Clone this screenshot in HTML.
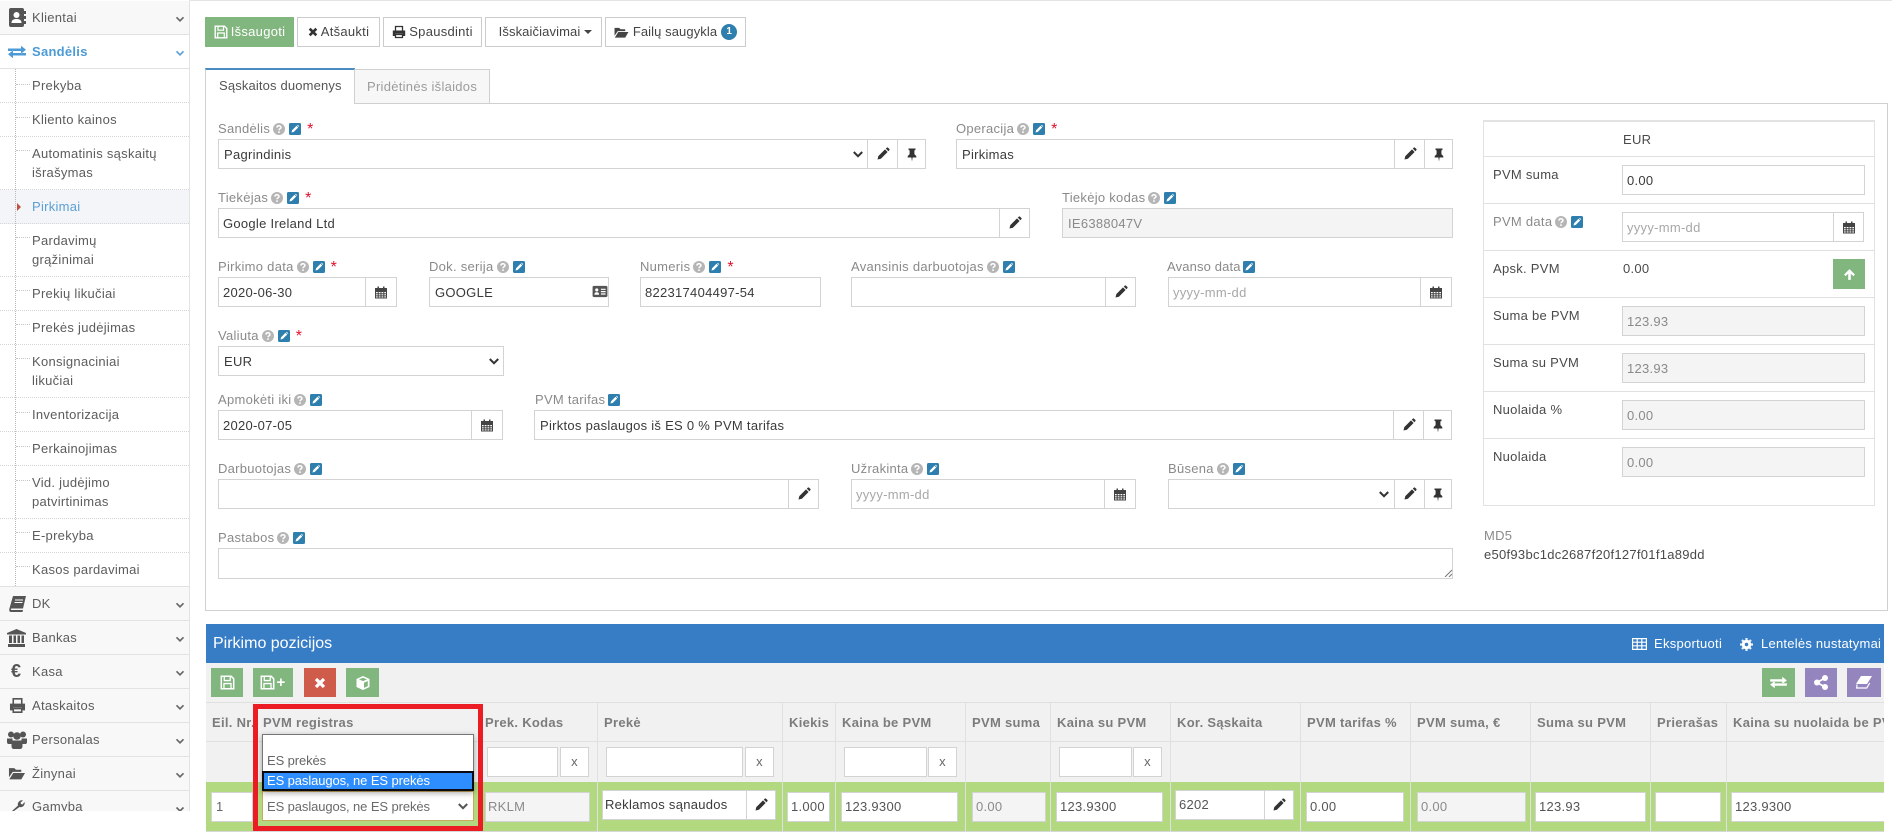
<!DOCTYPE html>
<html lang="lt"><head><meta charset="utf-8"><title>Pirkimai</title>
<style>
html,body{margin:0;padding:0;background:#fff}
body{width:1892px;height:840px;position:relative;overflow:hidden;font:13px/18px "Liberation Sans",Arial,sans-serif;color:#444;letter-spacing:.28px}
div,span{box-sizing:border-box}
.a,.r,.b,.i,.t,.l,.x,.c,svg.s{position:absolute}
.r{left:0;width:189px;padding-left:32px;color:#5c5c5c;border-bottom:1px dotted #d4d4d4;line-height:19px;padding-top:7px}
.m{left:0;width:189px;height:34px;position:absolute;background:#f8f8f8;border-bottom:1px solid #e2e2e2;padding:7px 0 0 32px;color:#5c5c5c;line-height:19px}
.h{position:absolute;left:16px;width:14px;border-top:1px dotted #c4c4c4;height:0}
.b{height:30px;top:17px;border:1px solid #ccc;background:#fff;color:#444;display:flex;align-items:center;justify-content:center;gap:3px;white-space:nowrap}
.b svg{flex:none}
.g{background:#82b67f;border-color:#82b67f;color:#fff}
.i{height:30px;border:1px solid #d3d3d3;background:#fff;color:#3a3a3a;line-height:30px;padding-left:5px;white-space:nowrap;overflow:hidden}
.n{line-height:28px}
.d{background:#f4f4f4;color:#8a8a8a}
.p{color:#a8a8a8}
.x{height:30px;border:1px solid #d3d3d3;background:#fff;display:flex;align-items:center;justify-content:center;color:#666}
.l{height:18px;color:#8a8a8a;display:flex;align-items:center;white-space:nowrap}
.l svg{flex:none}
.hp{width:12px;height:12px;margin-left:3px}
.ed{width:12px;height:12px;margin-left:4px}
.l b{color:#e3122d;font-weight:400;font-size:16px;margin-left:6px;line-height:14px;height:12px}
.t{color:#4a4a4a;white-space:nowrap;line-height:18px}
.th{position:absolute;top:713px;color:#7c7c7c;font-weight:700;white-space:nowrap;line-height:19px;letter-spacing:.3px}
.v{position:absolute;top:703px;height:128px;width:1px;background:#e0e0e0}
.w{position:absolute;height:1px;background:#e0e0e0}
.gb{position:absolute;top:668px;height:29px;display:flex;align-items:center;justify-content:center;gap:1px}
</style></head><body>
<svg width="0" height="0" style="position:absolute"><defs>
<symbol id="pen" viewBox="0 0 14 14"><path fill="currentColor" d="M1.500 12.500l.8-3.400 6.700-6.700 2.600 2.600-6.700 6.700zM9.800 1.600l.9-.9a1 1 0 0 1 1.400 0l1.200 1.200a1 1 0 0 1 0 1.400l-.9.9z"/></symbol>
<symbol id="pin" viewBox="0 0 14 14"><path fill="currentColor" d="M3.500 1h7v1.200L9.400 3v3.600l1.900 2V10H7.600L7 14l-.6-4H2.700V8.600l1.900-2V3L3.500 2.200z"/></symbol>
<symbol id="cal" viewBox="0 0 14 14"><path fill="none" stroke="currentColor" d="M1.500 3.500h11v9h-11zM1.500 6h11M1.500 8.200h11M1.500 10.400h11M4.200 6v6.500M7 6v6.500M9.800 6v6.500"/><path fill="currentColor" d="M1 2.500h12V5.500H1zM3.500 1h1.500v3H3.500zM9 1h1.500v3H9z"/></symbol>
<symbol id="chv" viewBox="0 0 12 12"><path fill="none" stroke="currentColor" stroke-width="2" d="M1.800 4l4.200 4.200L10.200 4"/></symbol>
<symbol id="hp" viewBox="0 0 12 12"><circle cx="6" cy="6" r="6" fill="#b5b5b5"/><path fill="none" stroke="#fff" stroke-width="1.500" d="M4 4.600c0-1.200.9-1.800 2-1.800s2 .7 2 1.700c0 1.300-2 1.300-2 2.700"/><rect x="5.200" y="8.300" width="1.600" height="1.600" fill="#fff"/></symbol>
<symbol id="ed" viewBox="0 0 12 12"><rect width="12" height="12" rx="1.500" fill="#2f7fae"/><path fill="#fff" d="M2.500 9.500l.6-2.300 4.400-4.400 1.700 1.700-4.400 4.400zM8.100 2.300l.6-.5 1.500 1.500-.6.6z"/></symbol>
<symbol id="save" viewBox="0 0 14 14"><path fill="none" stroke="currentColor" stroke-width="1.400" d="M1.200 1.200h9.300l2.300 2.300v9.300H1.200z"/><path fill="none" stroke="currentColor" stroke-width="1.200" d="M4 1.500v3.700h5.500V1.500M3.700 12.500V8h6.600v4.500"/></symbol>
<symbol id="tm" viewBox="0 0 12 12"><path fill="none" stroke="currentColor" stroke-width="3.200" d="M2 2l8 8M10 2l-8 8"/></symbol>
<symbol id="prt" viewBox="0 0 14 14"><path fill="none" stroke="currentColor" stroke-width="1.300" d="M3.500 6V1.500h7V6M3.500 9.500h7v3h-7z"/><path fill="currentColor" d="M.8 5.500h12.400v5.500h-2.500V8.800H3.300V11H.8z"/></symbol>
<symbol id="fol" viewBox="0 0 16 14"><path fill="currentColor" d="M.5 2h5l1.500 1.500h5V5.500H4L.5 10.500zM4.500 6.500H15.500L12 12.500H.8z"/></symbol>
<symbol id="card" viewBox="0 0 16 14"><rect x="0" y="1" width="16" height="12" rx="1.500" fill="currentColor"/><circle cx="4.500" cy="5.300" r="1.700" fill="#fff"/><path fill="#fff" d="M2 10.500c0-2 1-2.700 2.500-2.700S7 8.500 7 10.500zM9 4h5v1.300H9zM9 6.500h5v1.300H9zM9 9h5v1.300H9z"/></symbol>
<symbol id="swap" viewBox="0 0 18 14"><path fill="currentColor" d="M0 3.500h13V.8L18 4.700l-5 3.900V6H0zM18 8H5V5.400L0 9.300l5 3.900v-2.700h13z"/></symbol>
<symbol id="up" viewBox="0 0 12 12"><path fill="#fff" d="M6 1l5 5-1.500 1.500L7.200 5.300V11H4.800V5.300L2.500 7.500 1 6z"/></symbol>
</defs></svg>

<div class="a" style="left:0;top:0;width:1892px;height:1px;background:#e4e4e4"></div>

<!-- sidebar -->
<div class="a" style="left:0;top:0;width:190px;height:811px;background:#fff;border-right:1px solid #e3e3e3"></div>
<div class="m" style="top:1px">Klientai</div>
<div class="m" style="top:35px;background:#fff;color:#4d9bd6;font-weight:700">Sandėlis</div>
<div class="r a" style="top:69px;height:34px">Prekyba</div>
<div class="r a" style="top:103px;height:34px">Kliento kainos</div>
<div class="r a" style="top:137px;height:53px">Automatinis sąskaitų<br>išrašymas</div>
<div class="r a" style="top:190px;height:34px;background:#f3f5f8;color:#5b9fd3">Pirkimai</div>
<div class="r a" style="top:224px;height:53px">Pardavimų<br>grąžinimai</div>
<div class="r a" style="top:277px;height:34px">Prekių likučiai</div>
<div class="r a" style="top:311px;height:34px">Prekės judėjimas</div>
<div class="r a" style="top:345px;height:53px">Konsignaciniai<br>likučiai</div>
<div class="r a" style="top:398px;height:34px">Inventorizacija</div>
<div class="r a" style="top:432px;height:34px">Perkainojimas</div>
<div class="r a" style="top:466px;height:53px">Vid. judėjimo<br>patvirtinimas</div>
<div class="r a" style="top:519px;height:34px">E-prekyba</div>
<div class="r a" style="top:553px;height:34px;border-bottom:1px solid #e2e2e2">Kasos pardavimai</div>
<div class="m" style="top:587px">DK</div>
<div class="m" style="top:621px">Bankas</div>
<div class="m" style="top:655px">Kasa</div>
<div class="m" style="top:689px">Ataskaitos</div>
<div class="m" style="top:723px">Personalas</div>
<div class="m" style="top:757px">Žinynai</div>
<div class="m" style="top:791px;height:20px;overflow:hidden;border:0;padding-top:6px">Gamyba</div>
<div class="a" style="left:15px;top:69px;height:517px;border-left:1px dotted #b8b8b8"></div>
<div class="h" style="top:84px"></div><div class="h" style="top:117px"></div><div class="h" style="top:150px"></div><div class="h" style="top:237px"></div><div class="h" style="top:290px"></div><div class="h" style="top:324px"></div><div class="h" style="top:358px"></div><div class="h" style="top:412px"></div><div class="h" style="top:446px"></div><div class="h" style="top:480px"></div><div class="h" style="top:532px"></div><div class="h" style="top:566px"></div>
<div class="a" style="left:17px;top:203px;border-left:4px solid #c0503f;border-top:4px solid transparent;border-bottom:4px solid transparent"></div>
<svg class="s" style="left:175px;top:14px;width:10px;height:10px;color:#666"><use href="#chv"/></svg>
<svg class="s" style="left:175px;top:48px;width:10px;height:10px;color:#5aa0d6"><use href="#chv"/></svg>
<svg class="s" style="left:175px;top:600px;width:10px;height:10px;color:#666"><use href="#chv"/></svg>
<svg class="s" style="left:175px;top:634px;width:10px;height:10px;color:#666"><use href="#chv"/></svg>
<svg class="s" style="left:175px;top:668px;width:10px;height:10px;color:#666"><use href="#chv"/></svg>
<svg class="s" style="left:175px;top:702px;width:10px;height:10px;color:#666"><use href="#chv"/></svg>
<svg class="s" style="left:175px;top:736px;width:10px;height:10px;color:#666"><use href="#chv"/></svg>
<svg class="s" style="left:175px;top:770px;width:10px;height:10px;color:#666"><use href="#chv"/></svg>
<svg class="s" style="left:175px;top:804px;width:10px;height:7px;color:#666" viewBox="0 0 12 8"><use href="#chv" width="12" height="12"/></svg>
<!-- sidebar icons -->
<svg class="s" style="left:9px;top:8px;width:17px;height:19px" viewBox="0 0 17 19"><rect width="15" height="19" rx="2" fill="#555"/><rect x="15" y="3" width="2" height="3" fill="#555"/><rect x="15" y="8" width="2" height="3" fill="#555"/><rect x="15" y="13" width="2" height="3" fill="#555"/><circle cx="7.500" cy="7" r="3" fill="#fff"/><path fill="#fff" d="M2.500 15c0-3 2-4 5-4s5 1 5 4z"/></svg>
<svg class="s" style="left:8px;top:45px;width:18px;height:14px;color:#4d9bd6"><use href="#swap"/></svg>
<svg class="s" style="left:9px;top:596px;width:17px;height:16px" viewBox="0 0 17 16"><path fill="#555" d="M4 0h13l-3 12.500H2.500c-1 0-1 1.500 0 1.500H14l-.5 2H2C.5 16 0 14.500.3 13z"/><path stroke="#fff" d="M6 4h8M5.500 6.500h8"/></svg>
<svg class="s" style="left:7px;top:629px;width:19px;height:18px" viewBox="0 0 19 18"><path fill="#555" d="M9.500 0L19 4v1.500H0V4zM2 6.500h3V14H2zM6.500 6.500h2.500V14H6.500zM10.500 6.500H13V14h-2.500zM14.500 6.500h2.500V14h-2.500zM1 15h17v3H1z"/></svg>
<div class="a" style="left:11px;top:661px;font-size:18px;font-weight:700;color:#555;line-height:20px">€</div>
<svg class="s" style="left:9px;top:697px;width:17px;height:17px;color:#555"><use href="#prt"/></svg>
<svg class="s" style="left:7px;top:731px;width:20px;height:18px" viewBox="0 0 20 18"><g fill="#555"><circle cx="4" cy="3.500" r="3"/><circle cx="16" cy="3.500" r="3"/><circle cx="10" cy="5" r="3.800"/><path d="M0 7.500h5.500V13H1.500C.5 13 0 12 0 11zM14.500 7.500H20V11c0 1-.5 2-1.500 2h-4zM4.500 9.500h11V15c0 2-1 3-2.500 3H7c-1.500 0-2.500-1-2.500-3z"/></g></svg>
<svg class="s" style="left:8px;top:766px;width:18px;height:15px;color:#555"><use href="#fol"/></svg>
<svg class="s" style="left:11px;top:800px;width:15px;height:11px" viewBox="0 0 15 11"><path fill="#555" d="M1 11l6-5.500a4 4 0 0 1 5-5l-2.500 2 .5 1.500 1.500.5 2-2.500a4 4 0 0 1-5 5L3 11z"/></svg>

<!-- top buttons -->
<div class="b g" style="left:205px;width:89px"><svg width="14" height="14" style="color:#fff"><use href="#save"/></svg>Išsaugoti</div>
<div class="b" style="left:297px;width:83px"><svg width="10" height="10" style="color:#333"><use href="#tm"/></svg>Atšaukti</div>
<div class="b" style="left:383px;width:99px"><svg width="14" height="14" style="color:#333"><use href="#prt"/></svg>Spausdinti</div>
<div class="b" style="left:485px;width:117px;padding-left:4px;letter-spacing:.11px">Išskaičiavimai<span style="border-top:4px solid #444;border-left:4px solid transparent;border-right:4px solid transparent;margin-left:1px"></span></div>
<div class="b" style="left:605px;width:141px;letter-spacing:.09px"><svg width="15" height="13" style="color:#444;margin-right:1px"><use href="#fol"/></svg>Failų saugykla<span style="width:16px;height:16px;border-radius:50%;background:#2f7fae;color:#fff;font-size:10px;font-weight:700;line-height:16px;text-align:center;letter-spacing:0;margin-left:1px">1</span></div>

<!-- tabs + panel -->
<div class="a" style="left:205px;top:103px;width:1683px;height:508px;border:1px solid #d0d0d0"></div>
<div class="a" style="left:354px;top:69px;width:136px;height:35px;background:#f7f7f7;border:1px solid #d0d0d0;color:#9c9c9c;padding:8px 0 0 12px">Pridėtinės išlaidos</div>
<div class="a" style="left:205px;top:68px;width:150px;height:36px;background:#fff;border-left:1px solid #d0d0d0;border-right:1px solid #d0d0d0;border-top:2px solid #4a8bc4;padding:7px 0 0 13px;color:#555;letter-spacing:.15px">Sąskaitos duomenys</div>

<!-- form -->
<div class="l" style="left:218px;top:120px">Sandėlis<svg class="hp"><use href="#hp"/></svg><svg class="ed"><use href="#ed"/></svg><b>*</b></div>
<div class="i" style="left:218px;top:139px;width:650px">Pagrindinis</div>
<svg class="s" style="left:852px;top:148px;width:12px;height:12px;color:#333"><use href="#chv"/></svg>
<div class="x" style="left:867px;top:139px;width:31px;color:#333"><svg width="14" height="14"><use href="#pen"/></svg></div>
<div class="x" style="left:897px;top:139px;width:29px;color:#333"><svg width="14" height="15"><use href="#pin"/></svg></div>

<div class="l" style="left:956px;top:120px">Operacija<svg class="hp"><use href="#hp"/></svg><svg class="ed"><use href="#ed"/></svg><b>*</b></div>
<div class="i" style="left:956px;top:139px;width:439px">Pirkimas</div>
<div class="x" style="left:1394px;top:139px;width:31px;color:#333"><svg width="14" height="14"><use href="#pen"/></svg></div>
<div class="x" style="left:1424px;top:139px;width:29px;color:#333"><svg width="14" height="15"><use href="#pin"/></svg></div>

<div class="l" style="left:218px;top:189px">Tiekėjas<svg class="hp"><use href="#hp"/></svg><svg class="ed"><use href="#ed"/></svg><b>*</b></div>
<div class="i" style="left:218px;top:208px;width:782px;padding-left:4px">Google Ireland Ltd</div>
<div class="x" style="left:999px;top:208px;width:31px;color:#333"><svg width="14" height="14"><use href="#pen"/></svg></div>

<div class="l" style="left:1062px;top:189px">Tiekėjo kodas<svg class="hp"><use href="#hp"/></svg><svg class="ed"><use href="#ed"/></svg></div>
<div class="i d" style="left:1062px;top:208px;width:391px">IE6388047V</div>

<div class="l" style="left:218px;top:258px">Pirkimo data<svg class="hp"><use href="#hp"/></svg><svg class="ed"><use href="#ed"/></svg><b>*</b></div>
<div class="i" style="left:218px;top:277px;width:148px;padding-left:4px">2020-06-30</div>
<div class="x" style="left:365px;top:277px;width:32px;color:#444"><svg width="14" height="15"><use href="#cal"/></svg></div>

<div class="l" style="left:429px;top:258px">Dok. serija<svg class="hp"><use href="#hp"/></svg><svg class="ed"><use href="#ed"/></svg></div>
<div class="i" style="left:429px;top:277px;width:180px">GOOGLE</div>
<svg class="s" style="left:592px;top:285px;width:16px;height:13px;color:#555"><use href="#card"/></svg>

<div class="l" style="left:640px;top:258px">Numeris<svg class="hp"><use href="#hp"/></svg><svg class="ed"><use href="#ed"/></svg><b>*</b></div>
<div class="i" style="left:640px;top:277px;width:181px;padding-left:4px">822317404497-54</div>

<div class="l" style="left:851px;top:258px">Avansinis darbuotojas<svg class="hp"><use href="#hp"/></svg><svg class="ed"><use href="#ed"/></svg></div>
<div class="i" style="left:851px;top:277px;width:255px"></div>
<div class="x" style="left:1105px;top:277px;width:31px;color:#333"><svg width="14" height="14"><use href="#pen"/></svg></div>

<div class="l" style="left:1167px;top:258px;letter-spacing:.15px">Avanso data<svg class="ed" style="margin-left:2px"><use href="#ed"/></svg></div>
<div class="i p" style="left:1168px;top:277px;width:253px;padding-left:4px">yyyy-mm-dd</div>
<div class="x" style="left:1420px;top:277px;width:32px;color:#444"><svg width="14" height="15"><use href="#cal"/></svg></div>

<div class="l" style="left:218px;top:327px">Valiuta<svg class="hp"><use href="#hp"/></svg><svg class="ed"><use href="#ed"/></svg><b>*</b></div>
<div class="i" style="left:218px;top:346px;width:286px;padding-left:5px">EUR</div>
<svg class="s" style="left:488px;top:355px;width:12px;height:12px;color:#333"><use href="#chv"/></svg>

<div class="l" style="left:218px;top:391px">Apmokėti iki<svg class="hp"><use href="#hp"/></svg><svg class="ed"><use href="#ed"/></svg></div>
<div class="i" style="left:218px;top:410px;width:254px;padding-left:4px">2020-07-05</div>
<div class="x" style="left:471px;top:410px;width:32px;color:#444"><svg width="14" height="15"><use href="#cal"/></svg></div>

<div class="l" style="left:535px;top:391px">PVM tarifas<svg class="ed" style="margin-left:3px"><use href="#ed"/></svg></div>
<div class="i" style="left:534px;top:410px;width:860px">Pirktos paslaugos iš ES 0 % PVM tarifas</div>
<div class="x" style="left:1393px;top:410px;width:31px;color:#333"><svg width="14" height="14"><use href="#pen"/></svg></div>
<div class="x" style="left:1423px;top:410px;width:29px;color:#333"><svg width="14" height="15"><use href="#pin"/></svg></div>

<div class="l" style="left:218px;top:460px">Darbuotojas<svg class="hp"><use href="#hp"/></svg><svg class="ed"><use href="#ed"/></svg></div>
<div class="i" style="left:218px;top:479px;width:571px"></div>
<div class="x" style="left:788px;top:479px;width:31px;color:#333"><svg width="14" height="14"><use href="#pen"/></svg></div>

<div class="l" style="left:851px;top:460px">Užrakinta<svg class="hp"><use href="#hp"/></svg><svg class="ed"><use href="#ed"/></svg></div>
<div class="i p" style="left:851px;top:479px;width:254px;padding-left:4px">yyyy-mm-dd</div>
<div class="x" style="left:1104px;top:479px;width:32px;color:#444"><svg width="14" height="15"><use href="#cal"/></svg></div>

<div class="l" style="left:1168px;top:460px">Būsena<svg class="hp"><use href="#hp"/></svg><svg class="ed"><use href="#ed"/></svg></div>
<div class="i" style="left:1168px;top:479px;width:227px"></div>
<svg class="s" style="left:1378px;top:488px;width:12px;height:12px;color:#333"><use href="#chv"/></svg>
<div class="x" style="left:1394px;top:479px;width:31px;color:#333"><svg width="14" height="14"><use href="#pen"/></svg></div>
<div class="x" style="left:1424px;top:479px;width:28px;color:#333"><svg width="14" height="15"><use href="#pin"/></svg></div>

<div class="l" style="left:218px;top:529px">Pastabos<svg class="hp"><use href="#hp"/></svg><svg class="ed"><use href="#ed"/></svg></div>
<div class="i" style="left:218px;top:548px;width:1235px;height:31px"></div>
<svg class="s" style="left:1444px;top:569px;width:8px;height:8px"><path stroke="#777" fill="none" d="M1 8L8 1M5 8l3-3"/></svg>

<!-- summary table -->
<div class="a" style="left:1483px;top:120px;width:392px;height:386px;border:1px solid #e2e2e2;border-top:2px solid #e2e2e2"></div>
<div class="w" style="left:1483px;top:156px;width:392px"></div>
<div class="w" style="left:1483px;top:203px;width:392px"></div>
<div class="w" style="left:1483px;top:250px;width:392px"></div>
<div class="w" style="left:1483px;top:297px;width:392px"></div>
<div class="w" style="left:1483px;top:344px;width:392px"></div>
<div class="w" style="left:1483px;top:391px;width:392px"></div>
<div class="w" style="left:1483px;top:438px;width:392px"></div>
<div class="t" style="left:1623px;top:131px">EUR</div>
<div class="t" style="left:1493px;top:166px">PVM suma</div>
<div class="i" style="left:1622px;top:165px;width:243px;padding-left:4px">0.00</div>
<div class="l" style="left:1493px;top:213px">PVM data<svg class="hp"><use href="#hp"/></svg><svg class="ed"><use href="#ed"/></svg></div>
<div class="i p" style="left:1622px;top:212px;width:212px;padding-left:4px">yyyy-mm-dd</div>
<div class="x" style="left:1833px;top:212px;width:31px;color:#444"><svg width="14" height="15"><use href="#cal"/></svg></div>
<div class="t" style="left:1493px;top:260px">Apsk. PVM</div>
<div class="t" style="left:1623px;top:260px">0.00</div>
<div class="a" style="left:1833px;top:259px;width:32px;height:30px;background:#82b67f;display:flex;align-items:center;justify-content:center"><svg width="13" height="13"><use href="#up"/></svg></div>
<div class="t" style="left:1493px;top:307px">Suma be PVM</div>
<div class="i d" style="left:1622px;top:306px;width:243px;padding-left:4px">123.93</div>
<div class="t" style="left:1493px;top:354px">Suma su PVM</div>
<div class="i d" style="left:1622px;top:353px;width:243px;padding-left:4px">123.93</div>
<div class="t" style="left:1493px;top:401px">Nuolaida %</div>
<div class="i d" style="left:1622px;top:400px;width:243px;padding-left:4px">0.00</div>
<div class="t" style="left:1493px;top:448px">Nuolaida</div>
<div class="i d" style="left:1622px;top:447px;width:243px;padding-left:4px">0.00</div>
<div class="t" style="left:1484px;top:527px;color:#8a8a8a">MD5</div>
<div class="t" style="left:1484px;top:546px">e50f93bc1dc2687f20f127f01f1a89dd</div>

<!-- grid -->
<div class="a" style="left:206px;top:624px;width:1678px;height:39px;background:#367dc6"></div>
<div class="a" style="left:213px;top:634px;color:#fff;font-size:16px;line-height:20px;letter-spacing:0">Pirkimo pozicijos</div>
<svg class="s" style="left:1632px;top:638px;width:15px;height:12px" viewBox="0 0 15 12"><path fill="none" stroke="#fff" stroke-width="1.200" d="M.6.6h13.800v10.800H.6zM.6 4.200h13.800M.6 7.800h13.800M5.200.6v10.800M9.800.6v10.800"/></svg>
<div class="a" style="left:1654px;top:635px;color:#fff">Eksportuoti</div>
<svg class="s" style="left:1740px;top:638px;width:13px;height:13px" viewBox="0 0 13 13"><circle cx="6.500" cy="6.500" r="3.500" fill="none" stroke="#fff" stroke-width="2.500"/><path stroke="#fff" stroke-width="2.200" d="M6.500 0v13M0 6.500h13M2 2l9 9M11 2l-9 9" opacity=".9"/><circle cx="6.500" cy="6.500" r="1.700" fill="#367dc6"/></svg>
<div class="a" style="left:1761px;top:635px;color:#fff;white-space:nowrap;letter-spacing:.24px">Lentelės nustatymai</div>

<div class="a" style="left:206px;top:663px;width:1678px;height:119px;background:#f1f1f1"></div>
<div class="gb g" style="left:211px;width:32px"><svg width="15" height="15" style="color:#fff"><use href="#save"/></svg></div>
<div class="gb g" style="left:253px;width:40px"><svg width="15" height="15" style="color:#fff"><use href="#save"/></svg><span style="color:#fff;font-weight:700;font-size:15px;line-height:14px">+</span></div>
<div class="gb" style="left:304px;width:32px;background:#cf5b4b"><svg width="12" height="12" style="color:#fff"><use href="#tm"/></svg></div>
<div class="gb g" style="left:346px;width:33px"><svg width="16" height="16" viewBox="0 0 16 16"><path fill="#fff" d="M8 1l6.500 3v8L8 15l-6.500-3V4zM8 2.700L4 4.400l4 1.700 4-1.700zM9 7.700v5.200l3.800-1.800V6z"/></svg></div>
<div class="gb g" style="left:1762px;width:33px"><svg width="17" height="13" style="color:#fff"><use href="#swap"/></svg></div>
<div class="gb" style="left:1805px;width:32px;background:#9585bf"><svg width="14" height="15" viewBox="0 0 14 15"><circle cx="3" cy="7.500" r="3" fill="#fff"/><circle cx="11" cy="3" r="3" fill="#fff"/><circle cx="11" cy="12" r="3" fill="#fff"/><path stroke="#fff" stroke-width="1.800" d="M3 7.500L11 3M3 7.500L11 12"/></svg></div>
<div class="gb" style="left:1847px;width:34px;background:#9585bf"><svg width="16" height="13" viewBox="0 0 16 13"><path fill="#fff" d="M5 0h11l-5 8H0z"/><path fill="none" stroke="#fff" stroke-width="1.200" d="M1 8.500l-.3 3.500h10l3-5"/></svg></div>

<div class="w" style="left:206px;top:702px;width:1678px"></div>
<div class="w" style="left:206px;top:741px;width:1678px"></div>
<div class="a" style="left:206px;top:782px;width:1678px;height:49px;background:#b2d97f"></div>
<div class="w" style="left:206px;top:831px;width:1678px;background:#d8d8d8"></div>
<div class="v" style="left:597px"></div><div class="v" style="left:782px"></div><div class="v" style="left:835px"></div><div class="v" style="left:965px"></div><div class="v" style="left:1050px"></div><div class="v" style="left:1170px"></div><div class="v" style="left:1300px"></div><div class="v" style="left:1410px"></div><div class="v" style="left:1530px"></div><div class="v" style="left:1650px"></div><div class="v" style="left:1726px"></div>

<div class="th" style="left:212px">Eil. Nr.</div>
<div class="th" style="left:263px">PVM registras</div>
<div class="th" style="left:485px">Prek. Kodas</div>
<div class="th" style="left:604px">Prekė</div>
<div class="th" style="left:789px">Kiekis</div>
<div class="th" style="left:842px">Kaina be PVM</div>
<div class="th" style="left:972px">PVM suma</div>
<div class="th" style="left:1057px">Kaina su PVM</div>
<div class="th" style="left:1177px">Kor. Sąskaita</div>
<div class="th" style="left:1307px">PVM tarifas %</div>
<div class="th" style="left:1417px">PVM suma, €</div>
<div class="th" style="left:1537px">Suma su PVM</div>
<div class="th" style="left:1657px">Prierašas</div>
<div class="a" style="left:1727px;top:703px;width:157px;height:38px;overflow:hidden"><div class="th" style="left:6px;top:10px">Kaina su nuolaida be PVM</div></div>

<div class="i" style="left:487px;top:747px;width:71px"></div>
<div class="x" style="left:560px;top:747px;width:29px">x</div>
<div class="i" style="left:606px;top:747px;width:137px"></div>
<div class="x" style="left:745px;top:747px;width:29px">x</div>
<div class="i" style="left:844px;top:747px;width:83px"></div>
<div class="x" style="left:928px;top:747px;width:29px">x</div>
<div class="i" style="left:1059px;top:747px;width:73px"></div>
<div class="x" style="left:1133px;top:747px;width:29px">x</div>

<div class="i n" style="left:211px;top:792px;width:42px;padding-left:4px;color:#666">1</div>
<div class="i d n" style="left:485px;top:792px;width:105px;padding-left:2px">RKLM</div>
<div class="i n" style="left:602px;top:790px;width:145px;padding-left:2px">Reklamos sąnaudos</div>
<div class="x" style="left:746px;top:790px;width:30px;color:#333"><svg width="14" height="14"><use href="#pen"/></svg></div>
<div class="i n" style="left:787px;top:792px;width:43px;padding-left:3px;color:#555">1.000</div>
<div class="i n" style="left:841px;top:792px;width:117px;padding-left:3px;color:#555">123.9300</div>
<div class="i d n" style="left:972px;top:792px;width:74px;padding-left:3px">0.00</div>
<div class="i n" style="left:1056px;top:792px;width:107px;padding-left:3px;color:#555">123.9300</div>
<div class="i n" style="left:1175px;top:790px;width:90px;padding-left:3px;color:#555">6202</div>
<div class="x" style="left:1264px;top:790px;width:30px;color:#333"><svg width="14" height="14"><use href="#pen"/></svg></div>
<div class="i n" style="left:1306px;top:792px;width:98px;padding-left:3px;color:#555">0.00</div>
<div class="i d n" style="left:1417px;top:792px;width:109px;padding-left:3px">0.00</div>
<div class="i n" style="left:1535px;top:792px;width:111px;padding-left:3px;color:#555">123.93</div>
<div class="i n" style="left:1655px;top:792px;width:66px"></div>
<div class="i n" style="left:1731px;top:792px;width:153px;padding-left:3px;color:#555;border-right:0">123.9300</div>

<!-- select + dropdown -->
<div class="i" style="left:262px;top:791px;width:212px;height:30px;border-color:#c9a95c;color:#6a6a6a;padding-left:4px;line-height:30px;letter-spacing:-.1px">ES paslaugos, ne ES prekės</div>
<svg class="s" style="left:457px;top:800px;width:12px;height:12px;color:#555"><use href="#chv"/></svg>
<div class="a" style="left:253px;top:704px;width:230px;height:127px;border:5px solid #ec1c24"></div>
<div class="a" style="left:262px;top:734px;width:212px;height:57px;background:#fff;border:1px solid #767676;box-shadow:0 2px 6px rgba(0,0,0,.35)"></div>
<div class="a" style="left:267px;top:752px;color:#666;letter-spacing:-.1px">ES prekės</div>
<div class="a" style="left:262px;top:771px;width:212px;height:20px;background:#2f8eff;border:2px solid #0b0b14;color:#fff;padding-left:3px;line-height:16px;white-space:nowrap;letter-spacing:-.1px">ES paslaugos, ne ES prekės</div>
</body></html>
